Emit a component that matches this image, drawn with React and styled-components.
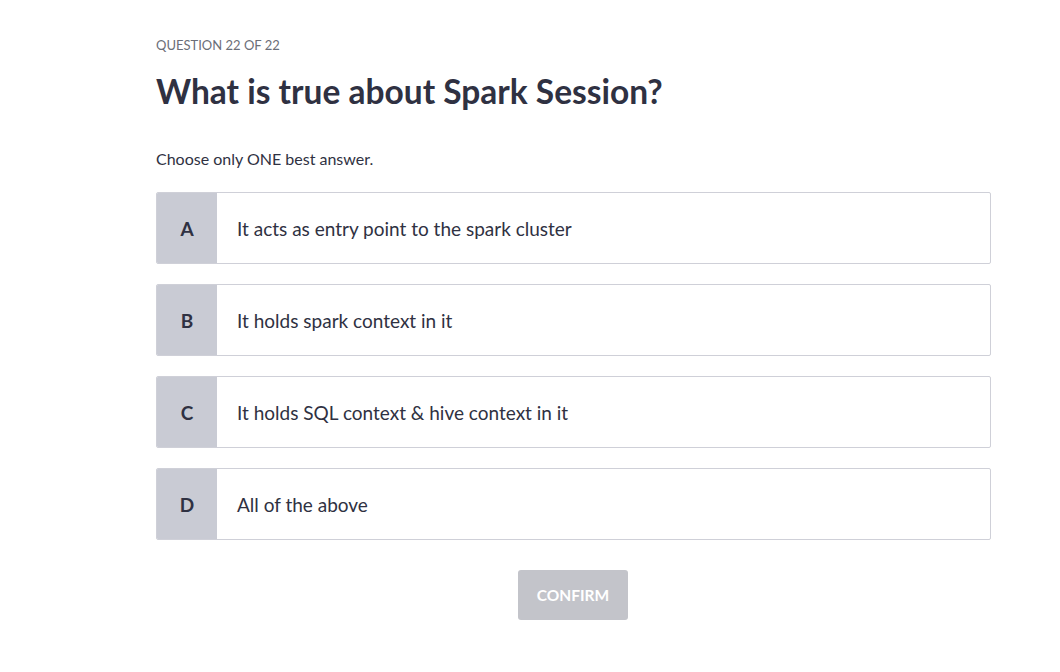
import styled, { createGlobalStyle } from "styled-components";

const GlobalStyle = createGlobalStyle`
  body {
    margin: 0;
    background: #ffffff;
    font-family: Lato, "Open Sans", sans-serif;
  }
`;

const options = [
  { key: "A", text: "It acts as entry point to the spark cluster" },
  { key: "B", text: "It holds spark context in it" },
  { key: "C", text: "It holds SQL context & hive context in it" },
  { key: "D", text: "All of the above" },
];

const App = () => {
  return (
    <>
      <GlobalStyle />
      <Page>
        <Counter>QUESTION 22 OF 22</Counter>
        <Title>What is true about Spark Session?</Title>
        <Hint>Choose only ONE best answer.</Hint>
        <OptionList>
          {options.map((item) => (
            <Option key={item.key}>
              <Letter>{item.key}</Letter>
              <OptionText>{item.text}</OptionText>
            </Option>
          ))}
        </OptionList>
        <Footer>
          <ConfirmButton disabled>CONFIRM</ConfirmButton>
        </Footer>
      </Page>
    </>
  );
};

export default App;

const Page = styled.div`
  width: 835px;
  margin: 0 0 0 156px;
  padding-top: 36px;
`;

const Counter = styled.div`
  font-size: 13px;
  line-height: 18px;
  color: #6b6e78;
`;

const Title = styled.h1`
  margin: 17px 0 0;
  font-size: 33.5px;
  line-height: 40px;
  font-weight: 700;
  color: #2f3142;
`;

const Hint = styled.p`
  margin: 38px 0 0;
  font-size: 16px;
  line-height: 20px;
  color: #2f3142;
`;

const OptionList = styled.div`
  display: flex;
  flex-direction: column;
  gap: 20px;
  margin-top: 23px;
`;

const Option = styled.div`
  display: flex;
  height: 72px;
  box-sizing: border-box;
  border: 1px solid #cfd0d8;
  border-radius: 2px;
  overflow: hidden;
  cursor: pointer;
`;

const Letter = styled.div`
  width: 60px;
  flex-shrink: 0;
  display: flex;
  align-items: center;
  justify-content: center;
  background: #c9cbd4;
  font-size: 19px;
  font-weight: 700;
  color: #2f3142;
`;

const OptionText = styled.div`
  display: flex;
  align-items: center;
  padding-left: 20px;
  font-size: 19px;
  color: #2f3142;
`;

const Footer = styled.div`
  display: flex;
  justify-content: center;
  margin-top: 30px;
`;

const ConfirmButton = styled.button`
  width: 110px;
  height: 50px;
  margin-right: 1px;
  border: none;
  border-radius: 3px;
  background: #c3c4ca;
  color: #ffffff;
  font-family: inherit;
  font-size: 15.5px;
  font-weight: 700;
`;
